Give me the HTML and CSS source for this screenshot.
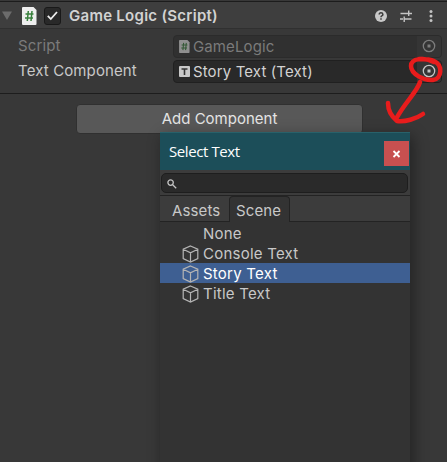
FILE: index.html
```
<!DOCTYPE html>
<html lang="en">
<head>
<meta charset="utf-8">
<title>Inspector</title>
<link rel="stylesheet" href="styles.css">
</head>
<body>
<main class="inspector">
  <header class="component-header">
    <svg class="foldout" width="12" height="12" viewBox="0 0 12 12"><path d="M1 1.5h10L6 10z"/></svg>
    <svg class="script-icon" width="15" height="18" viewBox="0 0 15 18"><path class="sheet" d="M1 0h10.500l3 3v14q0 1-1 1H1q-1 0-1-1V1q0-1 1-1z"/><path class="hash" d="M6.300 4L5.300 14M10 4L9 14M3.500 7h8M3 11h8"/></svg>
    <span class="checkbox"><svg width="15" height="15" viewBox="0 0 15 15"><path d="M2.800 7.800l3 3.200L12 4"/></svg></span>
    <h1>Game Logic (Script)</h1>
    <div class="tools">
      <svg width="12" height="12" viewBox="0 0 12 12"><circle cx="6" cy="6" r="6" fill="#c8c8c8"/><path d="M4.200 4.500Q4.200 2.800 6 2.800T7.900 4.500Q7.900 5.400 6.800 5.900Q6 6.300 6 7.200M6 8.300v1.500" fill="none" stroke="#3a3a3a" stroke-width="1.500"/></svg>
      <svg width="14" height="14" viewBox="0 0 14 14" fill="none" stroke="#c4c4c4" stroke-width="1.400"><path d="M1.500 4.500h8M10 4.500h3M9.700 1.500v5.500M1 10h3M5.500 10H12.500M5.200 7.500v5.500"/></svg>
      <svg width="4" height="12" viewBox="0 0 4 12" fill="#c4c4c4"><circle cx="2" cy="1.600" r="1.500"/><circle cx="2" cy="6" r="1.500"/><circle cx="2" cy="10.400" r="1.500"/></svg>
    </div>
  </header>
  <section class="properties">
    <div class="property disabled">
      <span class="label">Script</span>
      <div class="field">
        <svg class="script-icon" width="11" height="13" viewBox="0 0 15 18"><path class="sheet" d="M1 0h10.500l3 3v14q0 1-1 1H1q-1 0-1-1V1q0-1 1-1z"/><path class="hash" d="M6.300 4L5.300 14M10 4L9 14M3.500 7h8M3 11h8"/></svg>
        <span class="value">GameLogic</span>
        <span class="picker"><svg width="14" height="14" viewBox="0 0 14 14"><circle cx="7" cy="7" r="5.700"/><path d="M5.500 5.500h3v3h-3z"/></svg></span>
      </div>
    </div>
    <div class="property">
      <span class="label">Text Component</span>
      <div class="field">
        <svg width="11" height="11" viewBox="0 0 11 11"><rect width="11" height="11" rx="1" fill="#c8c8c8"/><path d="M2.500 3h6M5.500 3v6" fill="none" stroke="#333" stroke-width="1.600"/></svg>
        <span class="value">Story Text (Text)</span>
        <span class="picker"><svg width="14" height="14" viewBox="0 0 14 14"><circle cx="7" cy="7" r="5.700"/><path d="M5.500 5.500h3v3h-3z"/></svg></span>
      </div>
    </div>
  </section>
  <button class="add-component">Add Component</button>
</main>
<section class="popup">
  <header class="popup-title"><span>Select Text</span>
    <button class="close"><svg width="9" height="8" viewBox="0 0 9 8"><path d="M1.500 1l6 6M7.500 1l-6 6"/></svg></button>
  </header>
  <div class="search-bar"><div class="search"><svg width="10" height="10" viewBox="0 0 10 10"><circle cx="3.600" cy="3.600" r="2.700"/><path d="M5.700 5.700l3.500 3.500"/></svg></div></div>
  <nav class="tabs"><span class="tab">Assets</span><span class="tab active">Scene</span></nav>
  <ul class="list">
    <li><span class="cube"></span>None</li>
    <li><svg class="cube" viewBox="0 0 17 18"><path d="M8.500 1l7.300 3.200v9.400L8.500 17l-7.300-3.400V4.200zM1.200 4.200l7.300 3.600 7.300-3.600M8.500 7.800V17"/></svg>Console Text</li>
    <li class="selected"><svg class="cube" viewBox="0 0 17 18"><path d="M8.500 1l7.300 3.200v9.400L8.500 17l-7.300-3.400V4.200zM1.200 4.200l7.300 3.600 7.300-3.600M8.500 7.800V17"/></svg>Story Text</li>
    <li><svg class="cube" viewBox="0 0 17 18"><path d="M8.500 1l7.300 3.200v9.400L8.500 17l-7.300-3.400V4.200zM1.200 4.200l7.300 3.600 7.300-3.600M8.500 7.800V17"/></svg>Title Text</li>
  </ul>
</section>
<svg class="annotation" width="447" height="140" viewBox="0 0 447 140">
  <path d="M434 62C425 57 411 58 411 66C411 74 424 81 433 80C442 79 443 65 434 61C430 59 424 59 419 59"/>
  <path d="M420 82C417 92 405 102 396 119"/>
  <path d="M388 103C388 110 391 116 397 121C405 122 416 119 423 114"/>
</svg>
</body>
</html>
```
FILE: styles.css
```
* { box-sizing: border-box; }
body {
  margin: 0;
  height: 462px;
  overflow: hidden;
  position: relative;
  background: #383838;
  color: #c8c8c8;
  font: 15px/20px Inter, "Liberation Sans", sans-serif;
  letter-spacing: .12px;
}
svg { display: block; flex: none; }
button { padding: 0; font: inherit; letter-spacing: inherit; }
.inspector { padding-top: 1px; }
.component-header {
  height: 28px;
  display: flex;
  align-items: center;
  padding: 1px 14px 0 1px;
  background: #3e3e3e;
  border-top: 1px solid #1c1c1c;
  border-bottom: 1px solid #303030;
}
.foldout { fill: #6c6c6c; }
.script-icon .sheet { fill: #eee; }
.script-icon .hash { fill: none; stroke: #38803c; stroke-width: 1.5; }
.component-header .script-icon { margin-left: 9px; }
.checkbox {
  width: 17px;
  height: 18px;
  margin-left: 7px;
  border: 1px solid #191919;
  border-radius: 3px;
  background: #292929;
}
.checkbox path { fill: none; stroke: #eee; stroke-width: 1.8; }
h1 {
  margin: 0 0 0 8px;
  font-size: 15px;
  line-height: 20px;
  font-weight: 600;
  color: #d2d2d2;
  letter-spacing: .27px;
}
.tools {
  margin-left: auto;
  display: flex;
  align-items: center;
  gap: 12px;
}
.tools svg:last-child { margin-left: 4px; }
.properties {
  height: 65px;
  padding: 5px 5px 0 18px;
  border-bottom: 1px solid #1d1d1d;
}
.property { display: flex; align-items: center; height: 25px; }
.label { width: 155px; padding-bottom: 2px; }
.field {
  flex: 1;
  height: 23px;
  display: flex;
  align-items: center;
  padding-left: 5px;
  border: 1px solid #202020;
  border-radius: 4px;
  background: #292929;
  overflow: hidden;
}
.value { margin-left: 3px; color: #d2d2d2; }
.picker {
  margin-left: auto;
  width: 24px;
  height: 21px;
  padding: 3px 0 0 5px;
  background: #353535;
}
.picker circle { fill: none; stroke: #c4c4c4; stroke-width: 1.3; }
.picker path { fill: #c4c4c4; }
.disabled .label, .disabled .value { color: #7b7b7b; }
.disabled .field { background: #303030; border-color: #2b2b2b; }
.disabled .field svg { opacity: .5; }
.add-component {
  display: block;
  width: 287px;
  height: 30px;
  margin: 10px 0 0 76px;
  border: 1px solid #303030;
  border-radius: 4px;
  background: #585858;
  color: #e4e4e4;
  letter-spacing: 0;
}
.popup {
  position: absolute;
  left: 160px;
  top: 132px;
  width: 250px;
  height: 340px;
  background: #333;
  box-shadow: 3px 4px 14px rgba(0, 0, 0, .4);
}
.popup-title {
  height: 38px;
  display: flex;
  align-items: center;
  justify-content: space-between;
  padding: 1px 1px 0 9px;
  border-top: 1px solid #28616a;
  background: #1c4e59;
  color: #fff;
  font: 15px/20px "Open Sans", "Noto Sans", sans-serif;
  letter-spacing: -.4px;
}
.popup-title span { padding-bottom: 2px; }
.close {
  width: 25px;
  height: 25px;
  margin-top: 3px;
  display: grid;
  place-items: center;
  border: 0;
  background: #c75050;
}
.close path { fill: none; stroke: #fff; stroke-width: 1.8; }
.search-bar {
  height: 26px;
  padding: 3px 2px 0 1px;
  background: #3c3c3c;
  border-bottom: 1px solid #232323;
}
.search {
  height: 20px;
  padding: 5px 0 0 5px;
  border: 1px solid #1e1e1e;
  border-radius: 5px;
  background: #2a2a2a;
}
.search svg { fill: none; stroke: #c4c4c4; stroke-width: 1.3; }
.tabs {
  height: 26px;
  display: flex;
  background: #3c3c3c;
  border-bottom: 1px solid #232323;
}
.tab { width: 69px; height: 25px; padding: 5px 0 0 12px; }
.tab.active {
  width: 61px;
  height: 26px;
  padding: 4px 0 0 6px;
  border: 1px solid #232323;
  border-bottom: 0;
  border-radius: 4px 4px 0 0;
  background: #333;
}
.list { list-style: none; margin: 0; padding: 1px 0 0; letter-spacing: .23px; }
.list li { height: 20px; display: flex; align-items: center; padding: 1px 0 0 22px; line-height: 19px; }
.list .selected { background: #3e5f92; color: #fff; }
.cube { width: 17px; height: 18px; margin-right: 4px; fill: none; stroke: #b4b4b4; stroke-width: 1.2; }
.annotation {
  position: absolute;
  left: 0;
  top: 0;
  fill: none;
  stroke: #e81c1c;
  stroke-width: 4.5;
  stroke-linecap: round;
  stroke-linejoin: round;
}
```
